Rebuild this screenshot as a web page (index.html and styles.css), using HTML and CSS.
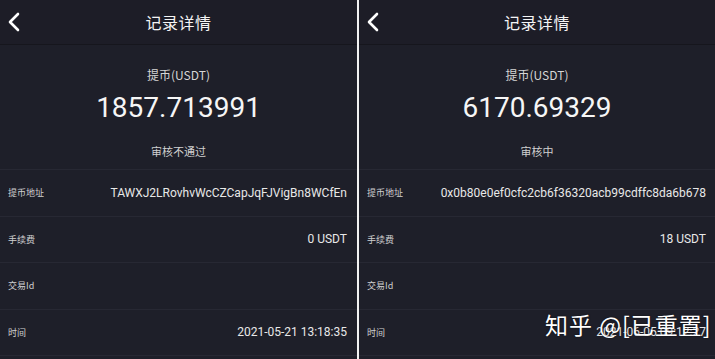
FILE: index.html
```html
<!DOCTYPE html>
<html lang="zh">
<head>
<meta charset="utf-8">
<link rel="stylesheet" href="styles.css">
</head>
<body>
<div class="shot">
  <section class="panel panel-left">
    <header class="bar">
      <svg class="back" width="14" height="20" viewBox="0 0 14 20"><polyline points="11,2 3,10 11,18" fill="none" stroke="#fff" stroke-width="2.6" stroke-linecap="round" stroke-linejoin="round"/></svg>
      <h1 class="title">记录详情</h1>
    </header>
    <div class="summary">
      <div class="coin">提币(USDT)</div>
      <div class="amount">1857.713991</div>
      <div class="status">审核不通过</div>
    </div>
    <div class="rows">
      <div class="row"><span class="label">提币地址</span><span class="value">TAWXJ2LRovhvWcCZCapJqFJVigBn8WCfEn</span></div>
      <div class="row"><span class="label">手续费</span><span class="value">0 USDT</span></div>
      <div class="row"><span class="label">交易Id</span><span class="value"></span></div>
      <div class="row"><span class="label">时间</span><span class="value">2021-05-21 13:18:35</span></div>
    </div>
  </section>
  <div class="divider"></div>
  <section class="panel panel-right">
    <header class="bar">
      <svg class="back" width="14" height="20" viewBox="0 0 14 20"><polyline points="11,2 3,10 11,18" fill="none" stroke="#fff" stroke-width="2.6" stroke-linecap="round" stroke-linejoin="round"/></svg>
      <h1 class="title">记录详情</h1>
    </header>
    <div class="summary">
      <div class="coin">提币(USDT)</div>
      <div class="amount">6170.69329</div>
      <div class="status">审核中</div>
    </div>
    <div class="rows">
      <div class="row"><span class="label">提币地址</span><span class="value hex">0x0b80e0ef0cfc2cb6f36320acb99cdffc8da6b678</span></div>
      <div class="row"><span class="label">手续费</span><span class="value">18 USDT</span></div>
      <div class="row"><span class="label">交易Id</span><span class="value"></span></div>
      <div class="row"><span class="label">时间</span><span class="value">2021-06-05 09:12:27</span></div>
    </div>
    <div class="watermark">知乎 @[已重置]</div>
  </section>
</div>
</body>
</html>
```
FILE: styles.css
```css
html, body {
  margin: 0;
  padding: 0;
  background: #1e1f29;
}
body {
  width: 715px;
  height: 359px;
  overflow: hidden;
  font-family: Roboto, "Noto Sans CJK SC", sans-serif;
  color: #fff;
}
.shot {
  display: flex;
  width: 715px;
  height: 359px;
}
.panel {
  position: relative;
  background: #1e1f29;
  display: flex;
  flex-direction: column;
  overflow: hidden;
}
.panel-left {
  width: 357px;
  box-shadow: inset 0 1px 0 #d8d8d8;
}
.panel-right {
  width: 356px;
}
.divider {
  width: 2px;
  background: #f2f2f2;
}
.bar {
  height: 44px;
  flex: none;
  display: flex;
  align-items: center;
  justify-content: center;
  position: relative;
  background: #1d1d27;
  border-bottom: 1px solid #16161d;
}
.back {
  position: absolute;
  left: 7px;
  top: 12px;
}
.title {
  margin: 0;
  font-family: "Noto Sans CJK SC", sans-serif;
  font-size: 16px;
  font-weight: 400;
  color: #f4f4f4;
  letter-spacing: 0.5px;
}
.summary {
  display: flex;
  flex-direction: column;
  align-items: center;
  padding: 21px 0 9px;
}
.coin {
  font-size: 12px;
  line-height: 17px;
  color: #d6d6d6;
  font-family: "Noto Sans CJK SC", Roboto, sans-serif;
}
.amount {
  font-size: 28px;
  line-height: 34px;
  margin-top: 8px;
  color: #f6f6f6;
  font-family: Roboto, sans-serif;
}
.status {
  margin-top: 18px;
  font-size: 11px;
  line-height: 17px;
  color: #d0d0d0;
  font-family: "Noto Sans CJK SC", sans-serif;
}
.rows {
  display: flex;
  flex-direction: column;
}
.row {
  height: 45.5px;
  border-top: 1px solid #272833;
  display: flex;
  align-items: center;
  justify-content: space-between;
  padding: 0 10px 0 8px;
}
.row:last-child {
  border-bottom: 1px solid #272833;
}
.panel-right .row {
  padding-right: 9px;
}
.label {
  font-family: "Noto Sans CJK SC", sans-serif;
  font-size: 9px;
  color: #d0d0d0;
}
.value {
  font-family: Roboto, sans-serif;
  font-size: 12px;
  color: #e8e8e8;
}
.value.hex {
  font-size: 12px;
}
.watermark {
  position: absolute;
  left: 186px;
  top: 309px;
  font-family: "Noto Sans CJK SC", sans-serif;
  font-size: 23px;
  line-height: 30px;
  letter-spacing: 1px;
  color: #fff;
  text-shadow: 0 0 2px rgba(0,0,0,0.6);
  white-space: nowrap;
}
```
